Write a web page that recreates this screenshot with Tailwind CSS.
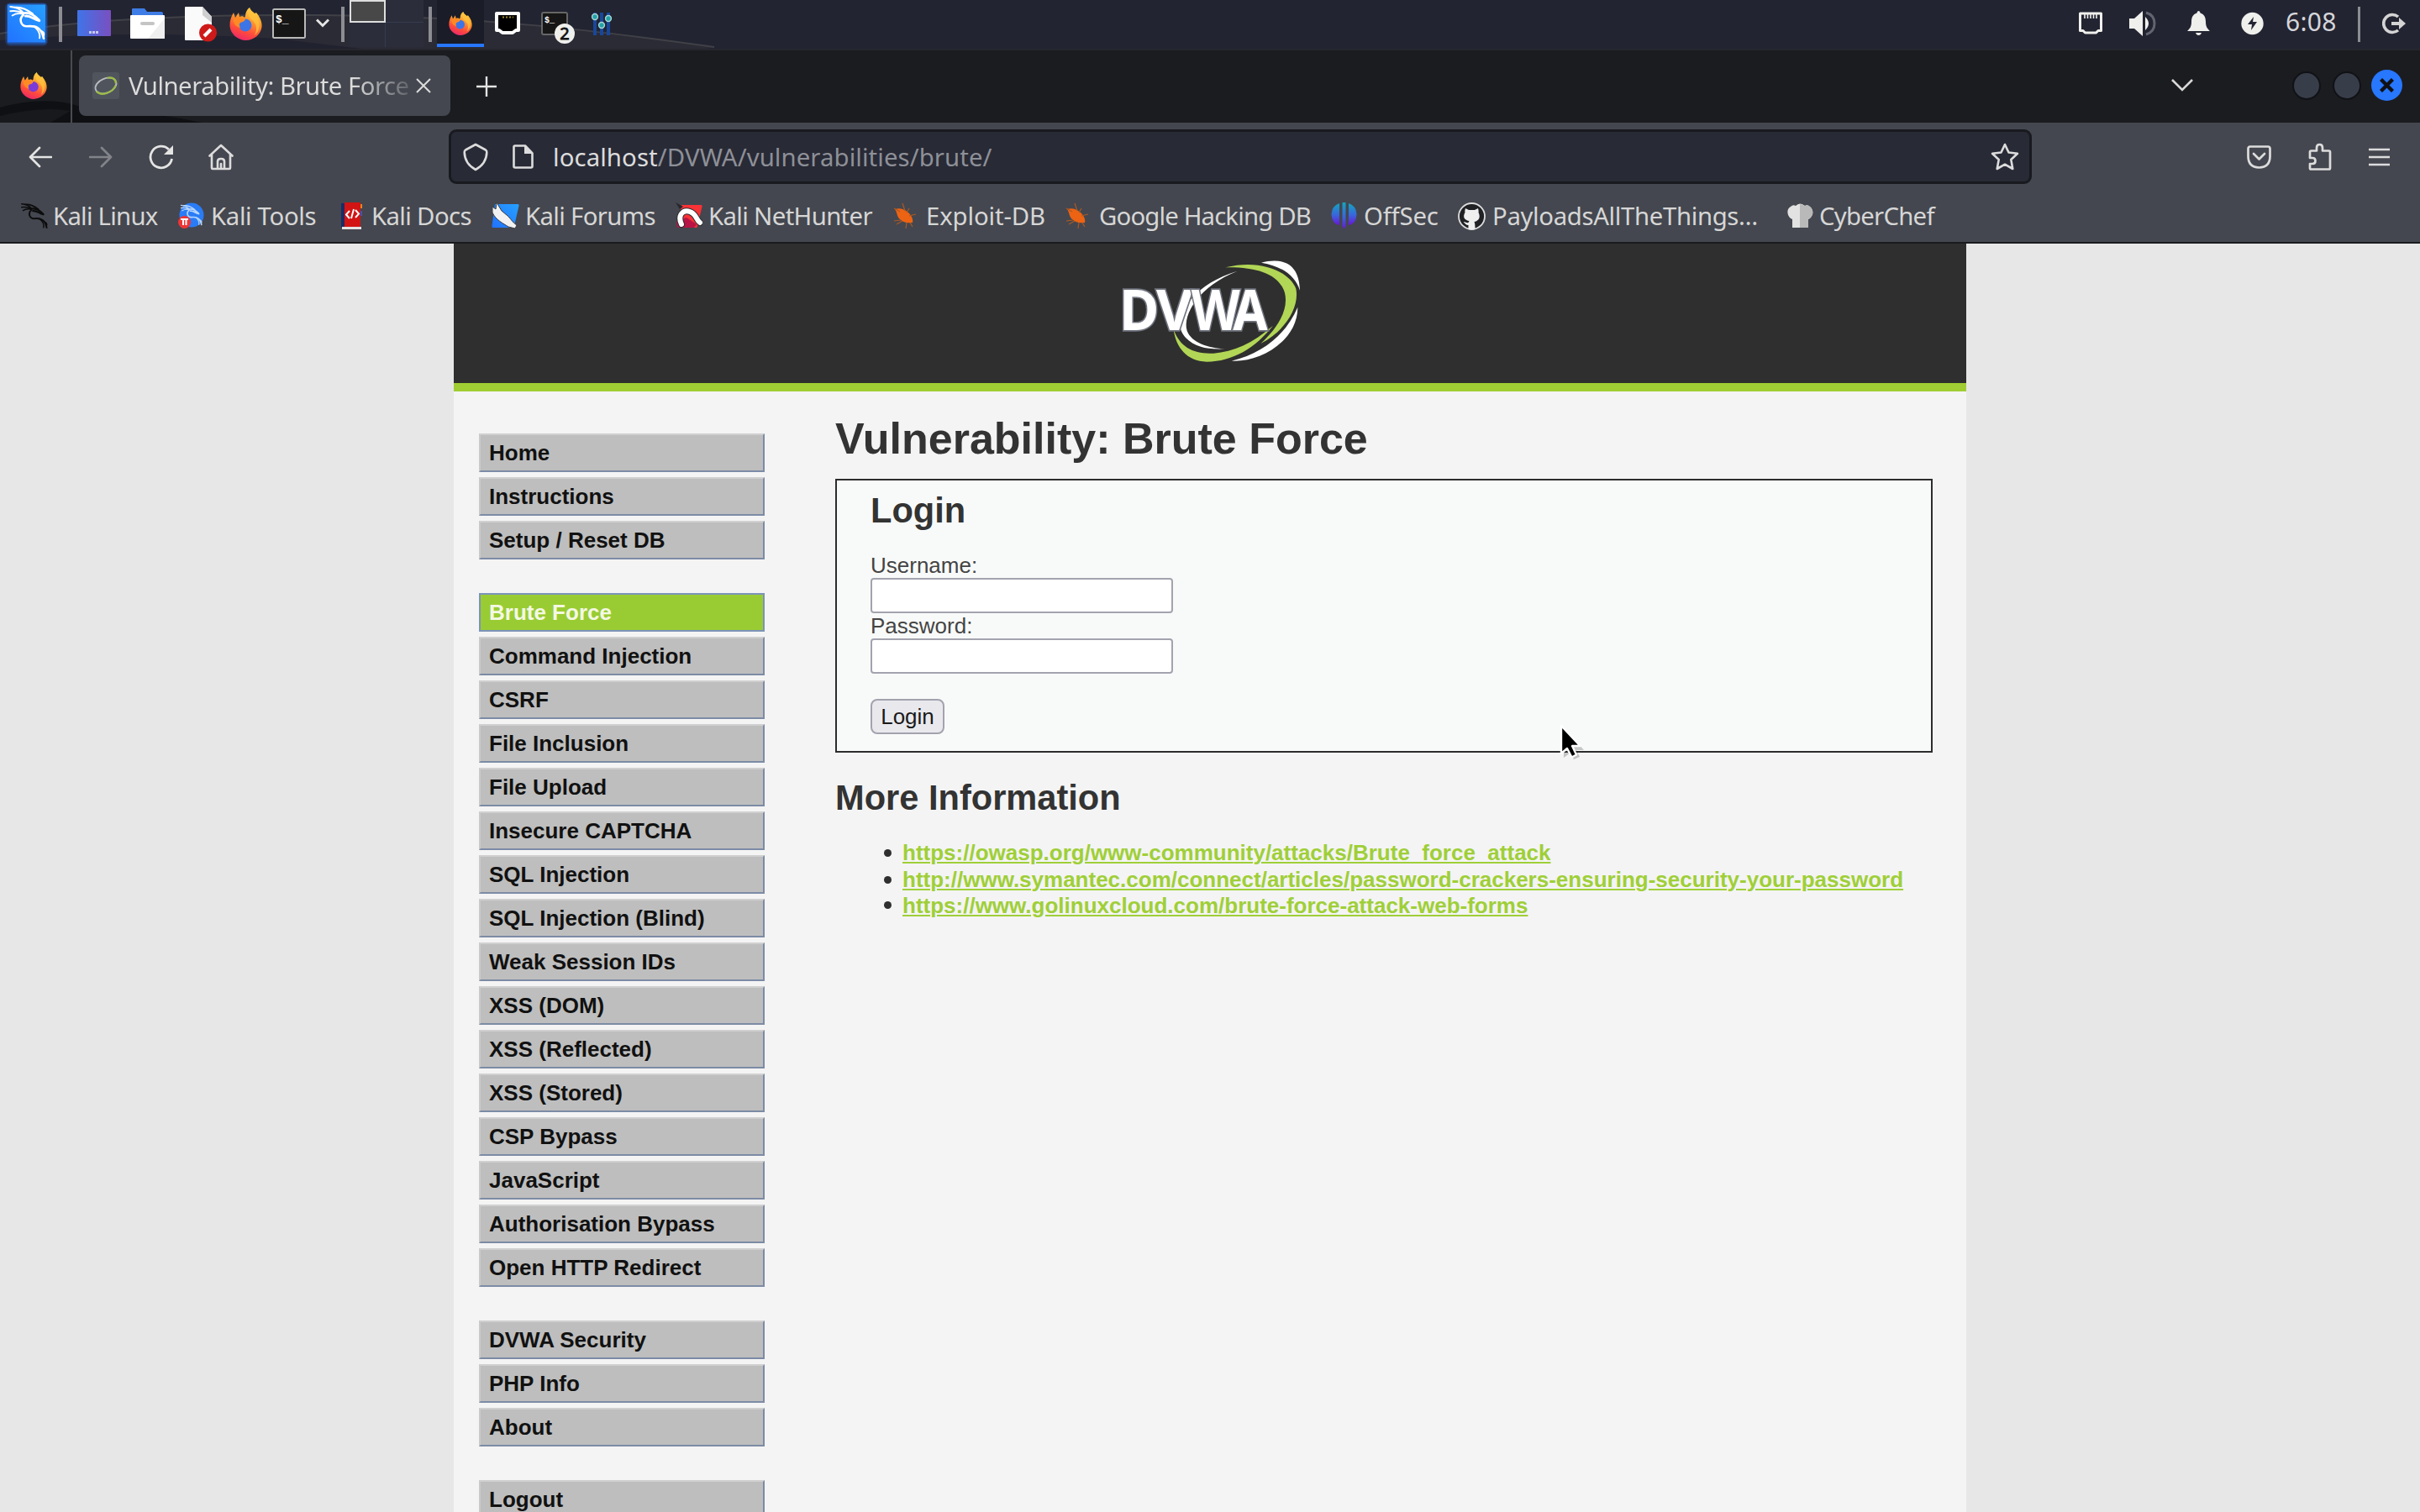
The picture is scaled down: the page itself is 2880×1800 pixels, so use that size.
<!DOCTYPE html>
<html lang="en">
<head>
<meta charset="utf-8">
<title>Vulnerability: Brute Force</title>
<script src="https://cdn.jsdelivr.net/npm/@tailwindcss/browser@4"></script>
</head>
<body class="w-[2880px] h-[1800px] overflow-hidden flex flex-col bg-[#e7e7e7] font-['Liberation_Sans',sans-serif] text-[#333333]">

<!-- Shared icon symbols -->
<svg width="0" height="0" class="absolute">
  <defs>
    <linearGradient id="gBlue" x1="0" y1="1" x2="1" y2="0"><stop offset="0" stop-color="#2172ff"/><stop offset="1" stop-color="#27a0ff"/></linearGradient>
    <linearGradient id="gDesk" x1="0" y1="0" x2="1" y2="0"><stop offset="0" stop-color="#3f74e8"/><stop offset="1" stop-color="#7a4fc0"/></linearGradient>
    <linearGradient id="gFox" x1=".8" y1="0" x2=".4" y2="1"><stop offset="0" stop-color="#ffe14a"/><stop offset=".4" stop-color="#ff9a2e"/><stop offset=".75" stop-color="#ff4a3c"/><stop offset="1" stop-color="#ee2a68"/></linearGradient>
    <linearGradient id="gOff" x1="0" y1="0" x2="0" y2="1"><stop offset="0" stop-color="#12a5c0"/><stop offset=".55" stop-color="#3b64dc"/><stop offset="1" stop-color="#6a14d8"/></linearGradient>
    <symbol id="dragon" viewBox="30 18 134 128">
      <g fill="none" stroke="currentColor" stroke-linecap="round" stroke-linejoin="round">
        <path stroke-width="6" d="M37 24C58 25 74 33 86 48M37 40C58 37 70 40 84 48M44 56C56 48 68 47 82 50"/>
        <path stroke-width="7" d="M54 27C78 24 100 36 118 50"/>
        <path stroke-width="9" d="M82 48C106 42 124 54 141 73M92 58C110 56 118 68 142 75"/>
        <path stroke-width="8" d="M84 54C66 70 76 96 98 95C130 92 150 100 158 139"/>
        <path stroke-width="6" d="M122 95C140 108 146 120 143 138M150 112C158 116 160 122 158 128"/>
      </g>
    </symbol>
    <symbol id="firefox" viewBox="0 0 39 39">
      <path fill="url(#gFox)" d="M24 0c1 3 3 4.500 6 7l2-1c5 6 7 12 6.500 17C37.500 32 29 39 19.500 39S1 31 .5 22C.2 16 2 11 5 6l2 6 4-6 1 5c2-1 5-1 6 1l1-2c0-4 2-8 5-10z"/>
      <path fill="#ffc33d" d="M24 0c1 3 3 4.500 6 7 7 7 8 20 0 26 4-8 2-14-3-18-4-3-6-8-3-15z" opacity=".75"/>
      <circle cx="19" cy="21" r="7.500" fill="var(--core,#3d74e6)"/>
      <path fill="#ff8a24" d="M5 13c4-3 9-2 14 1-1 3-4 3-6 4-2 2-1 4 0 6-5-1-9-5-8-11z"/>
    </symbol>
    <symbol id="bug" viewBox="0 0 30 36">
      <path fill="#ec6313" d="M3 10C9 8 14 10 19 14c4 4 6 8 5 12-6 1-11 0-15-4C5 19 6 14 3 10z"/>
      <path fill="none" stroke="#a85a25" stroke-width="1.200" d="M2 9l7 4M12 3l3 9M20 9l-3 5M28 16l-8 2M2 24l8-1M5 28l7-4M16 33l1-7M24 31l-3-5"/>
    </symbol>
  </defs>
</svg>

<!-- Desktop panel -->
<header class="relative h-[58px] shrink-0 bg-[#222431] flex">
  <svg class="absolute left-0 top-0" width="900" height="58" viewBox="0 0 900 58">
    <path fill="#2a2b35" d="M0 40C100 22 230 17 380 18C580 19 720 38 850 56L840 58H0z"/>
    <path fill="none" stroke="#404147" stroke-width="2" d="M0 40C100 22 230 17 380 18C580 19 720 38 850 56"/>
    <path fill="#21222f" d="M0 48C120 38 220 40 330 46L430 58H0z"/>
  </svg>
  <div class="relative flex h-full w-full items-start">
    <svg width="64" height="58" viewBox="0 0 64 58">
      <rect x="8" y="4" width="48" height="49" rx="4" fill="#2777ff" opacity=".35"/>
      <rect x="6" y="3" width="51" height="52" rx="6" fill="#2777ff" opacity=".2"/>
      <rect x="9" y="5.500" width="45" height="45" fill="url(#gBlue)"/>
      <use href="#dragon" x="10" y="6" width="44" height="42" class="text-white"/>
    </svg>
    <div class="ml-[6px] mt-2 h-[42px] w-1 bg-[#8c8d92]"></div>
    <svg class="ml-[18px] mt-3" width="40" height="31" viewBox="0 0 40 31"><rect width="40" height="31" rx="1" fill="url(#gDesk)"/><path stroke="#c9c8ee" stroke-width="3" stroke-dasharray="3 1" d="M14 26.500h12"/></svg>
    <svg class="ml-[23px] mt-[10px]" width="41" height="36" viewBox="0 0 41 36"><path fill="#3f7de6" d="M2 1q0-1 1-1h14l3 4h17q2 0 2 2v8H2z"/><path fill="#fff" d="M0 9q0-1 1-1h39q1 0 1 1v26q0 1-1 1H1q-1 0-1-1z"/><path fill="#efefef" d="M41 12v23q0 1-1 1H21z"/><rect x="12" y="16" width="17" height="4" rx="2" fill="#c4c4c4"/></svg>
    <svg class="ml-6 mt-2" width="38" height="42" viewBox="0 0 38 42"><path fill="#fafafa" d="M1 0h20l11 12v27q0 1-1 1H1q-1 0-1-1V1q0-1 1-1z"/><path fill="#cfcfcf" d="M21 0l11 12v7L21 10z"/><circle cx="27.500" cy="31" r="10.500" fill="#cf1a1a"/><path stroke="#fff" stroke-width="4" d="M23 35l8-8"/></svg>
    <svg class="ml-[15px] mt-[9px]" width="39" height="39"><use href="#firefox"/></svg>
    <svg class="ml-3 mt-[10px]" width="40" height="36" viewBox="0 0 40 36"><rect x="1" y="1" width="38" height="34" rx="1.500" fill="#161616" stroke="#b9b9b9" stroke-width="2"/><text x="4" y="17" font-size="13" font-weight="700" fill="#fff" font-family="Liberation Mono, monospace">$_</text></svg>
    <svg class="ml-3 mt-[22px]" width="16" height="11" viewBox="0 0 16 11"><path fill="none" stroke="#e6e6e6" stroke-width="3" d="M1 1.500l7 7 7-7"/></svg>
    <div class="ml-[14px] mt-2 h-[42px] w-1 bg-[#8c8d92]"></div>
    <div class="ml-[6px] grid h-[56px] w-[88px] grid-cols-[43px_45px] grid-rows-[27px_29px] bg-[#2b2d3a]">
      <div class="border-2 border-[#dedede] bg-[#484848]"></div>
      <div class="border-b border-[#353c50]"></div>
      <div class="border-r border-[#353c50]"></div>
      <div></div>
    </div>
    <div class="ml-[6px] mt-2 h-[42px] w-1 bg-[#8c8d92]"></div>
    <div class="ml-[6px] h-[56px] w-14 border-b-4 border-[#2777ff] bg-[#1a1c28] flex justify-center pt-[14px]"><svg width="28" height="28"><use href="#firefox"/></svg></div>
    <svg class="ml-3 mt-[14px]" width="32" height="28" viewBox="0 0 32 28"><path fill="#000" stroke="#fff" stroke-width="4" stroke-linejoin="round" d="M3 2h26v20h-3l-4 3H10l-4-3H3z"/><path stroke="#a08a2c" stroke-width="2" stroke-dasharray="2 2" d="M10 6.500h13"/></svg>
    <svg class="ml-6 mt-[14px]" width="40" height="39" viewBox="0 0 40 39"><rect x="1" y="1" width="30" height="26" rx="2" fill="#161616" stroke="#666" stroke-width="2"/><text x="4" y="13" font-size="10" font-weight="700" fill="#fff" font-family="Liberation Mono, monospace">$_</text><circle cx="28" cy="26" r="12" fill="#efefec"/><text x="28" y="33" font-size="20" text-anchor="middle" fill="#111" stroke="#111" stroke-width=".8" font-family="Noto Sans, sans-serif">2</text></svg>
    <svg class="ml-[19px] mt-[14px]" width="27" height="28" viewBox="0 0 27 28"><path stroke="#17479a" stroke-width="4" d="M5 1v27M13 1v27M21 1v27"/><g fill="#23a3a6" stroke="#a5d3dc" stroke-width="1.500"><circle cx="5" cy="6" r="3.400"/><circle cx="21" cy="8" r="3.400"/><circle cx="13" cy="16" r="3.400"/></g></svg>

    <div class="ml-auto flex h-full items-start pr-[17px]">
      <svg class="mt-[14px]" width="30" height="27" viewBox="0 0 30 27"><path fill="none" stroke="#efefec" stroke-width="3" stroke-linejoin="round" d="M2.500 2h25v20.500h-3.500l-2.500 2.500h-13l-2.500-2.500h-3.500z"/><path stroke="#efefec" stroke-width="1.600" d="M8 3v5M11.500 3v5M15 3v5M18.500 3v5M22 3v5"/></svg>
      <svg class="ml-[31px] mt-[13px]" width="32" height="30" viewBox="0 0 32 30"><path fill="#efefec" d="M0 9h6l10-9v30L6 21H0z"/><path fill="#efefec" d="M19 7q8 8 0 16z"/><path fill="none" stroke="#62646f" stroke-width="3" d="M20 2q10 3 10 13T20 28"/></svg>
      <svg class="ml-[37px] mt-[13px]" width="27" height="29" viewBox="0 0 27 29"><path fill="#efefec" d="M13.500 0q2 0 2 2.500C21 4 22 9 22 13c0 6 2 8 5 11H0c3-3 5-5 5-11 0-4 1-9 6.500-10.500Q11.500 0 13.500 0zM10 26h7q-1 3-3.500 3T10 26z"/></svg>
      <svg class="ml-9 mt-[14px]" width="29" height="28" viewBox="0 0 29 28"><circle cx="14.500" cy="14" r="13.200" fill="#efefec"/><path fill="#222431" d="M16 6l-7 9h5l-1 7 7-10h-5z"/></svg>
      <div class="ml-[25px] mt-[6px] w-[62px] whitespace-nowrap font-['Noto_Sans',sans-serif] text-[30px] leading-[40px] tracking-[0.3px] text-[#d5d5da]">6:08</div>
      <div class="ml-[24px] mt-2 h-[42px] w-[3px] bg-[#8c8d92]"></div>
      <svg class="ml-[26px] mt-[15px]" width="28" height="26" viewBox="0 0 28 26"><path fill="none" stroke="#d4d4d4" stroke-width="3.600" d="M19 5A10.500 10.500 0 1 0 19 21"/><path stroke="#d4d4d4" stroke-width="4" d="M11 13h10"/><path fill="#d4d4d4" d="M20 6l8 7-8 7z"/></svg>
    </div>
  </div>
</header>

<!-- Browser tab strip -->
<div class="relative h-[88px] shrink-0 border-t-2 border-[#26272d] bg-[#1b1c20] font-['Noto_Sans',sans-serif] text-[29.333px] text-[#dcdcdc]">
  <svg class="absolute left-0 top-[58px]" width="240" height="28" viewBox="0 0 240 28"><path fill="#0f1013" d="M0 10C40 -2 90 -1 110 18Q180 14 240 28H0z"/><path fill="#18191d" d="M0 20Q50 8 84 14L60 28H0z"/></svg>
  <div class="relative flex h-full items-start">
    <svg class="ml-6 mt-[26px] [--core:#7a3bd8]" width="32" height="32"><use href="#firefox"/></svg>
    <div class="ml-7 h-[86px] w-[2px] bg-[#4a4b50]"></div>
    <div class="ml-2 mt-[6px] flex h-[72px] w-[442px] items-center rounded-lg bg-[#44474f] pl-4">
      <svg class="shrink-0" width="32" height="32" viewBox="0 0 32 32"><rect width="32" height="32" rx="3" fill="#50545d"/><g fill="none" transform="rotate(-22 16 16)"><ellipse cx="16" cy="16" rx="13" ry="8.500" stroke="#b9bbbf" stroke-width="1.800"/><path stroke="#9bbb45" stroke-width="2.200" d="M3 18C6 26 20 27 27 20M21 8C27 9 30 13 28 18"/></g></svg>
      <span class="ml-[11px] w-[334px] whitespace-nowrap leading-[44px] tracking-[-0.5px] bg-linear-to-r from-[#dcdcdc] from-80% to-[#dcdcdc]/20 bg-clip-text text-transparent">Vulnerability: Brute Force</span>
      <svg class="ml-[8px] shrink-0" width="18" height="18" viewBox="0 0 18 18"><path stroke="#dcdcdc" stroke-width="2" d="M1 1l16 16M17 1L1 17"/></svg>
    </div>
    <svg class="ml-[31px] mt-[31px]" width="24" height="24" viewBox="0 0 24 24"><path stroke="#e4e4e4" stroke-width="2.400" d="M12 0v24M0 12h24"/></svg>
    <div class="ml-auto flex items-center pr-[21px] pt-[23px]">
      <svg width="26" height="15" viewBox="0 0 26 15"><path fill="none" stroke="#d8d8d8" stroke-width="2.600" d="M1 1l12 12L25 1"/></svg>
      <div class="ml-[118px] size-[34px] rounded-full border-2 border-[#111216] bg-[#383d4a]"></div>
      <div class="ml-[14px] size-[34px] rounded-full border-2 border-[#111216] bg-[#383d4a]"></div>
      <div class="ml-[12px] flex size-[37px] items-center justify-center rounded-full bg-[#2777ff]"><svg width="17" height="17" viewBox="0 0 17 17"><path stroke="#101114" stroke-width="4.400" d="M1.500 1.500l14 14M15.500 1.500l-14 14"/></svg></div>
    </div>
  </div>
</div>

<!-- Navigation toolbar -->
<div class="flex h-[80px] shrink-0 items-center bg-[#44474f] pt-px font-['Noto_Sans',sans-serif] text-[29.333px]">
  <svg class="ml-[34px]" width="28" height="26" viewBox="0 0 28 26"><path fill="none" stroke="#e4e4e4" stroke-width="2.700" stroke-linecap="round" stroke-linejoin="round" d="M13 2L2 13l11 11M2 13h25"/></svg>
  <svg class="ml-11" width="28" height="26" viewBox="0 0 28 26"><path fill="none" stroke="#82848a" stroke-width="2.700" stroke-linecap="round" stroke-linejoin="round" d="M15 2l11 11-11 11M26 13H1"/></svg>
  <svg class="ml-[43px]" width="30" height="30" viewBox="0 0 30 30"><path fill="none" stroke="#e4e4e4" stroke-width="2.800" d="M24 6A12.800 12.800 0 1 0 27.500 17"/><path fill="#e4e4e4" d="M29 1v11H18z"/></svg>
  <svg class="ml-[41px]" width="30" height="32" viewBox="0 0 30 32"><path fill="none" stroke="#dcdcdc" stroke-width="2.600" stroke-linejoin="round" stroke-linecap="round" d="M1.500 14.500L15 2l13.500 12.500M4 13v16q0 1 1 1h20q1 0 1-1V13M11 30V21q0-3 4-3t4 3v9M15 24v6"/></svg>
  <div class="ml-[256px] flex h-[65px] w-[1884px] items-center rounded-[9px] border-[3px] border-[#191a20] bg-[#282a36] whitespace-nowrap">
    <svg class="ml-[14px]" width="30" height="34" viewBox="0 0 30 34"><path fill="none" stroke="#dcdcdc" stroke-width="2.600" stroke-linejoin="round" d="M15 2l12 6.500q1.500 1 1.300 3C28 21 24 27 15 32 6 27 2 21 1.700 11.500q-.2-2 1.300-3z"/></svg>
    <svg class="ml-[29px]" width="25" height="29" viewBox="0 0 25 29"><path fill="none" stroke="#dcdcdc" stroke-width="2.600" stroke-linejoin="round" d="M3 1.500h12l8.500 9V26q0 1.500-1.500 1.500H3Q1.500 27.500 1.500 26V3Q1.500 1.500 3 1.500z"/><path fill="#dcdcdc" d="M14 1v10h10z"/></svg>
    <span class="ml-[23px] leading-[44px] tracking-[0.09px] text-[#dcdcdc]">localhost<span class="text-[#8e9097]">/DVWA/vulnerabilities/brute/</span></span>
    <svg class="ml-auto mr-[12px]" width="34" height="33" viewBox="0 0 34 33"><path fill="none" stroke="#dcdcdc" stroke-width="2.600" stroke-linejoin="round" d="M17 2l4.500 9.500 10.500 1.300-7.700 7.200 2 11L17 25.700 7.700 31l2-11L2 12.800l10.500-1.300z"/></svg>
  </div>
  <svg class="ml-auto" width="29" height="28" viewBox="0 0 29 28"><path fill="none" stroke="#dcdcdc" stroke-width="2.700" stroke-linejoin="round" d="M4 1.500h21q2.500 0 2.500 2.500v9q0 13-13 13.500-13-.5-13-13.500V4Q1.500 1.500 4 1.500z"/><path fill="none" stroke="#dcdcdc" stroke-width="2.700" stroke-linecap="round" stroke-linejoin="round" d="M8 10l6.500 6.500L21 10"/></svg>
  <svg class="ml-[44px]" width="28" height="33" viewBox="0 0 28 33"><path fill="none" stroke="#dcdcdc" stroke-width="2.700" stroke-linejoin="round" d="M2 18v-7q0-1.500 1.500-1.500H10V6q0-4 3.500-4T17 6v3.500h7.500Q26 9.500 26 11v19q0 1.500-1.500 1.500h-21Q2 31.500 2 30v-5h3q3.500 0 3.500-3.500T5 18z"/></svg>
  <svg class="ml-[44px] mr-[36px]" width="25" height="22" viewBox="0 0 25 22"><path stroke="#dcdcdc" stroke-width="2.600" d="M0 2h25M0 11h25M0 20h25"/></svg>
</div>

<!-- Bookmarks toolbar -->
<nav class="grid h-[64px] shrink-0 grid-cols-[188px_192px_181px_219px_258px_205px_317px_151px_391px_220px] items-center border-b-2 border-[#1a1b1f] bg-[#44474f] pl-6 whitespace-nowrap font-['Noto_Sans',sans-serif] text-[29.333px] text-[#d6d6d6]">
  <a class="flex items-center gap-[6px] leading-[44px] tracking-[-0.75px]"><svg class="text-[#0c0c0d]" width="33" height="32"><use href="#dragon"/></svg>Kali Linux</a>
  <a class="flex items-center gap-[8px] leading-[44px] tracking-[-0.35px]"><svg width="31" height="32" viewBox="0 0 31 32"><circle cx="16" cy="15" r="14.500" fill="#2a7cf6"/><use href="#dragon" x="2" y="2" width="27" height="26" class="text-[#b8d6ff]"/><circle cx="7.500" cy="23.500" r="7.500" fill="#ee3535"/><path stroke="#fff" stroke-width="2" fill="none" d="M3 20h9M6 20v7M9.500 20v7"/></svg>Kali Tools</a>
  <a class="flex items-center gap-[11px] pl-[2px] leading-[44px] tracking-[-0.65px]"><svg width="25" height="32" viewBox="0 0 25 32"><path fill="#1c2b66" d="M0 1h4v29H0z"/><path fill="#d31414" d="M4 0h19v29H4z"/><path fill="#e3e3e3" d="M1 29h23v3H1z"/><path fill="#e08a1d" d="M23 2h2v5h-2z"/><path fill="#3458b8" d="M23 10h2v6h-2z"/><path fill="none" stroke="#fff" stroke-width="2" d="M10 10l-4 4.500 4 4.500M17 9l4 4.500-4 4.500M15 8l-3 11"/></svg>Kali Docs</a>
  <a class="flex items-center gap-[7px] leading-[44px] tracking-[-0.65px]"><svg width="33" height="32" viewBox="0 0 33 32"><path fill="url(#gBlue)" d="M4 2h27q2 0 1.500 2L27 28q-.5 2-2.500 2H2q-2 0-1.500-2z"/><path fill="#f2f2f2" stroke="#3a3c42" stroke-width="1" d="M1 5l4 3 1-8 6 10 6 5c5 4 6 8 12 12l-2 4-8-2C14 25 5 21 1 12z"/></svg>Kali Forums</a>
  <a class="flex items-center gap-[7px] leading-[44px] tracking-[-0.65px]"><svg width="32" height="32" viewBox="0 0 32 32"><path fill="#f93236" d="M7 3h23q2 0 1.500 2l-6 25H3z"/><path fill="#b81445" d="M1 22l12-4 12 8-3 4H2z"/><path fill="none" stroke="#2c2d32" stroke-width="8" stroke-linecap="round" d="M7 26C2 15 9 8 17 11s7 9 12 13"/><path fill="none" stroke="#fff" stroke-width="6" stroke-linecap="round" d="M7 26C2 15 9 8 17 11s7 9 12 13"/><path fill="#26272b" d="M0 0l9 5-4 3z"/></svg>Kali NetHunter</a>
  <a class="flex items-center gap-[10px] leading-[44px] tracking-[-0.12px]"><svg width="30" height="36"><use href="#bug"/></svg>Exploit-DB</a>
  <a class="flex items-center gap-[11px] leading-[44px] tracking-[-0.85px]"><svg width="30" height="36"><use href="#bug"/></svg>Google Hacking DB</a>
  <a class="flex items-center gap-[8px] leading-[44px] tracking-[-0.2px]"><svg width="31" height="32" viewBox="0 0 31 32"><g fill="url(#gOff)"><path d="M10 1v26Q1 26 .5 14 1 4 10 1z"/><path d="M21 1v26q9-1 9.500-13Q30 4 21 1z"/><path d="M13.500 0h4v28l-2 4-2-4z"/></g></svg>OffSec</a>
  <a class="flex items-center gap-[8px] leading-[44px] tracking-[-0.35px]"><svg width="33" height="33" viewBox="0 0 33 33"><circle cx="16.500" cy="16.500" r="15.500" fill="#202124" stroke="#dcdcdc" stroke-width="1.800"/><path fill="#efefef" d="M9 7l4 2h7l4-2q1 3 .5 5c3 6 0 10-5 11 1 2 1 6 1 9q-4 1-8 0v-5c-3 0-4-2-6-4 3 0 4 2 6 1l1-2c-6-1-8-5-5-10Q8 10 9 7z"/></svg>PayloadsAllTheThings…</a>
  <a class="flex items-center gap-[7px] pl-[1px] leading-[44px] tracking-[-0.75px]"><svg width="31" height="30" viewBox="0 0 31 30"><path fill="#e2e2e2" d="M6 29V19C0 17-2 7 4 4q3-3 6-1 5-5 11 0 3-2 6 1c6 5 3 13-2 15v10z"/><path fill="#b9b9b9" d="M15 1q3 0 6 2 3-2 6 1c6 5 3 13-2 15v10H15z"/></svg>CyberChef</a>
</nav>

<!-- Page -->
<div class="mx-auto w-[1800px] flex-1 bg-[#f4f4f4]">
  <div class="flex h-[176px] justify-center border-b-[10px] border-[#a0cd33] bg-[#2f2f2f] pt-[19px]">
    <svg width="218" height="125" viewBox="90 86 654 375">
      <path fill="#fff" d="M515 127C440 150 390 182 352 225C300 290 300 330 330 365C365 400 410 408 470 405C410 402 350 382 335 340C318 280 380 180 515 127z"/>
      <path fill="#b2d656" d="M472 114C600 82 700 130 724 190C738 260 680 345 598 386C650 340 700 270 684 205C664 140 590 112 472 114z"/>
      <path fill="#fff" d="M600 97C660 82 735 85 738 196C722 150 685 112 600 97z"/>
      <path fill="#fff" d="M730 256C730 380 590 455 494 448C610 420 690 350 730 256z"/>
      <path fill="#b2d656" d="M287 336C295 400 335 450 405 451C500 450 580 400 642 322C570 385 500 415 430 421C360 425 310 400 287 336z"/>
      <g font-family="Noto Sans, sans-serif" font-weight="700" font-size="200" fill="#fff" stroke="#70747f" stroke-width="10" paint-order="stroke"><text x="93" y="339" textLength="142" lengthAdjust="spacingAndGlyphs">D</text><text x="225" y="339" textLength="130" lengthAdjust="spacingAndGlyphs">V</text><text x="350" y="339" textLength="174" lengthAdjust="spacingAndGlyphs">W</text><text x="499" y="339" textLength="124" lengthAdjust="spacingAndGlyphs">A</text></g>
      <g font-family="Noto Sans, sans-serif" font-weight="700" font-size="200" fill="none" stroke="#fff" stroke-width="6" aria-hidden="true"></g>
    </svg>
  </div>
  <div class="flex items-start pl-[30px]">
    <div class="flex w-[340px] flex-col gap-10 pt-[50px] text-[26px] font-bold leading-[42px] text-[#111111]">
      <ul class="flex flex-col gap-[6px] *:border-2 *:border-t-[#d0d0d0] *:border-l-[#c8cac8] *:border-r-[#7c8ba5] *:border-b-[#7c8ba5] *:bg-[#bebebe] *:pl-[10px]">
        <li>Home</li><li>Instructions</li><li>Setup / Reset DB</li>
      </ul>
      <ul class="flex flex-col gap-[6px]">
        <li class="border-2 border-[#7c93b8] bg-[#99cc33] pl-[10px] text-[#f4f8e4]">Brute Force</li>
        <li class="contents">
          <ul class="flex flex-col gap-[6px] *:border-2 *:border-t-[#d0d0d0] *:border-l-[#c8cac8] *:border-r-[#7c8ba5] *:border-b-[#7c8ba5] *:bg-[#bebebe] *:pl-[10px]">
            <li>Command Injection</li><li>CSRF</li><li>File Inclusion</li><li>File Upload</li><li>Insecure CAPTCHA</li><li>SQL Injection</li><li>SQL Injection (Blind)</li><li>Weak Session IDs</li><li>XSS (DOM)</li><li>XSS (Reflected)</li><li>XSS (Stored)</li><li>CSP Bypass</li><li>JavaScript</li><li>Authorisation Bypass</li><li>Open HTTP Redirect</li>
          </ul>
        </li>
      </ul>
      <ul class="flex flex-col gap-[6px] *:border-2 *:border-t-[#d0d0d0] *:border-l-[#c8cac8] *:border-r-[#7c8ba5] *:border-b-[#7c8ba5] *:bg-[#bebebe] *:pl-[10px]">
        <li>DVWA Security</li><li>PHP Info</li><li>About</li>
      </ul>
      <ul class="flex flex-col gap-[6px] *:border-2 *:border-t-[#d0d0d0] *:border-l-[#c8cac8] *:border-r-[#7c8ba5] *:border-b-[#7c8ba5] *:bg-[#bebebe] *:pl-[10px]">
        <li>Logout</li>
      </ul>
    </div>
    <main class="ml-[84px] w-[1306px] pt-[26px]">
      <h1 class="text-[52px] font-bold leading-[60px]">Vulnerability: Brute Force</h1>
      <section class="relative mt-[18px] h-[326px] border-2 border-[#2c2c2c] bg-[#f8faf9] pl-[40px] pt-3">
        <h2 class="text-[41.6px] font-bold leading-[48px]">Login</h2>
        <form class="mt-[26px] flex flex-col items-start text-[26px] leading-[30px] text-[#444444]">
          <label>Username:</label>
          <input type="text" class="h-[42px] w-[360px] rounded-[4px] border-2 border-[#a3a3af] bg-white">
          <label>Password:</label>
          <input type="password" class="h-[42px] w-[360px] rounded-[4px] border-2 border-[#a3a3af] bg-white">
          <button type="button" class="mt-[30px] h-[42px] w-[88px] rounded-[8px] border-2 border-[#a3a3af] bg-[#e9e9ed] text-[26px] leading-[38px] text-[#1a1a1a]">Login</button>
        </form>
        <svg class="absolute left-[860px] top-[289px]" width="32" height="46" viewBox="0 0 32 46"><path fill="#000" opacity=".2" d="M5 5v36l8-6 4 8 7-3-4-8h9z"/><path fill="#000" stroke="#fff" stroke-width="2.400" stroke-linejoin="round" d="M2 3v33l7-6 5.500 10.500 5.500-3-5-10.500h9.500z"/></svg>
      </section>
      <h2 class="mt-[30px] text-[41.6px] font-bold leading-[48px]">More Information</h2>
      <ul class="mt-[25px] list-none whitespace-nowrap text-[26px] font-bold leading-[30px] text-[#9fcf38]">
        <li class="flex h-8 items-center pl-[58px]"><i class="mr-[14px] size-[9px] rounded-full bg-[#2f2f2f]"></i><a class="-ml-px underline decoration-2 underline-offset-[2px]">https://owasp.org/www-community/attacks/Brute_force_attack</a></li>
        <li class="flex h-8 items-center pl-[58px]"><i class="mr-[14px] size-[9px] rounded-full bg-[#2f2f2f]"></i><a class="-ml-px underline decoration-2 underline-offset-[2px]">http://www.symantec.com/connect/articles/password-crackers-ensuring-security-your-password</a></li>
        <li class="flex h-[29px] items-center pl-[58px]"><i class="mr-[14px] size-[9px] rounded-full bg-[#2f2f2f]"></i><a class="-ml-px underline decoration-2 underline-offset-[2px]">https://www.golinuxcloud.com/brute-force-attack-web-forms</a></li>
      </ul>
    </main>
  </div>
</div>
</body>
</html>
